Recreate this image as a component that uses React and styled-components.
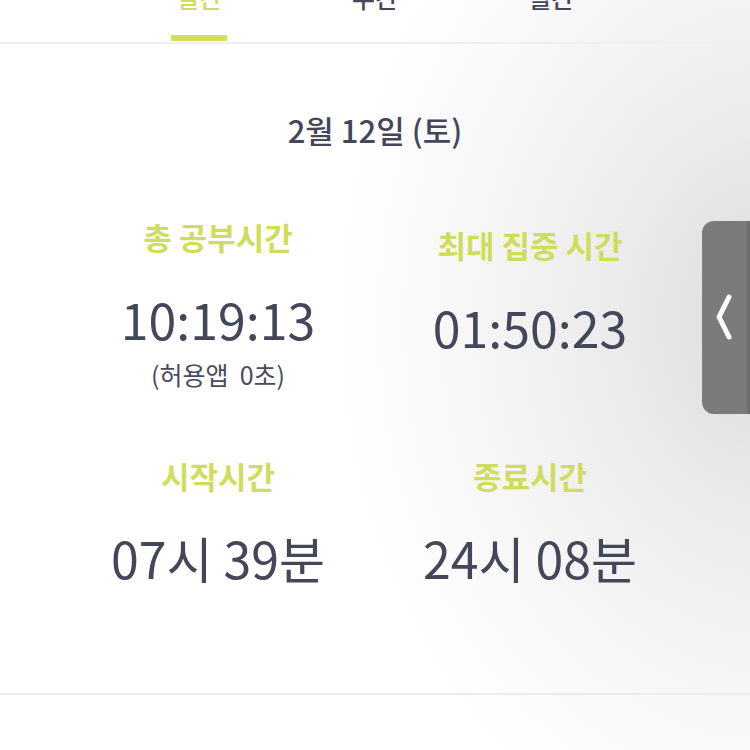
import React from 'react';
import styled, { createGlobalStyle } from 'styled-components';

const GlobalStyle = createGlobalStyle`
  html, body {
    margin: 0;
    padding: 0;
  }
  body {
    width: 750px;
    height: 750px;
    overflow: hidden;
    font-family: "Noto Sans CJK KR", "Noto Sans", sans-serif;
    background:
      radial-gradient(ellipse 440px 560px at 770px 320px, #dadada 0%, #ebebeb 35%, #f7f7f7 70%, rgba(255,255,255,0) 100%),
      #fff;
  }
`;

const tabs = ['일간', '주간', '월간'];

const stats = [
  { label: '총 공부시간', value: '10:19:13', note: '(허용앱  0초)' },
  { label: '최대 집중 시간', value: '01:50:23', nudge: 8 },
  { label: '시작시간', value: '07시 39분' },
  { label: '종료시간', value: '24시 08분' },
];

const App = () => {
  return (
    <S.Page>
      <GlobalStyle />
      <S.TabBar>
        {tabs.map((tab, index) => (
          <S.Tab key={tab}>
            <S.TabText $active={index === 0}>{tab}</S.TabText>
            <S.Indicator $active={index === 0} />
          </S.Tab>
        ))}
      </S.TabBar>
      <S.Divider />
      <S.DateTitle>2월 12일 (토)</S.DateTitle>
      <S.Grid>
        {stats.map((item) => (
          <S.Cell key={item.label} $nudge={item.nudge || 0}>
            <S.Label>{item.label}</S.Label>
            <S.Value>{item.value}</S.Value>
            {item.note && <S.Note>{item.note}</S.Note>}
          </S.Cell>
        ))}
      </S.Grid>
      <S.BottomDivider />
      <S.Handle>
        <svg width="20" height="50" viewBox="0 0 20 50">
          <path
            d="M15 4 L5 24 L15 44"
            fill="none"
            stroke="#fff"
            strokeWidth="5"
            strokeLinecap="round"
            strokeLinejoin="round"
          />
        </svg>
      </S.Handle>
    </S.Page>
  );
};

const S = {
  Page: styled.div`
    position: relative;
    width: 750px;
    height: 750px;
    display: flex;
    flex-direction: column;
  `,
  TabBar: styled.div`
    display: flex;
    justify-content: center;
    margin-top: -20px;
  `,
  Tab: styled.div`
    width: 176px;
    display: flex;
    flex-direction: column;
    align-items: center;
  `,
  TabText: styled.div`
    font-size: 25px;
    font-weight: 500;
    line-height: 34px;
    color: ${(p) => (p.$active ? '#cfdd5c' : '#45465a')};
  `,
  Indicator: styled.div`
    margin-top: 21px;
    width: 56px;
    height: 6px;
    background: ${(p) => (p.$active ? '#d3e05f' : 'transparent')};
  `,
  Divider: styled.div`
    margin-top: 1px;
    height: 2px;
    background: #efefef;
  `,
  DateTitle: styled.div`
    margin-top: 66px;
    text-align: center;
    font-size: 31px;
    font-weight: 500;
    line-height: 40px;
    color: #45465a;
  `,
  Grid: styled.div`
    display: grid;
    grid-template-columns: 312px 312px;
    justify-content: center;
    align-items: start;
    row-gap: 64px;
    margin-top: 66px;
    padding-right: 2px;
  `,
  Cell: styled.div`
    display: flex;
    flex-direction: column;
    align-items: center;
    padding-top: ${(p) => p.$nudge}px;
  `,
  Label: styled.div`
    font-size: 31px;
    font-weight: 700;
    line-height: 42px;
    color: #cfdd5c;
  `,
  Value: styled.div`
    margin-top: 30px;
    font-size: 50px;
    font-weight: 400;
    line-height: 60px;
    color: #44465a;
  `,
  Note: styled.div`
    margin-top: 9px;
    font-size: 25px;
    line-height: 34px;
    color: #4a4b5c;
    white-space: pre;
  `,
  BottomDivider: styled.div`
    margin-top: auto;
    margin-bottom: 55px;
    height: 2px;
    background: #ececec;
  `,
  Handle: styled.div`
    position: absolute;
    top: 221px;
    right: 0;
    width: 48px;
    height: 193px;
    border-radius: 12px 0 0 12px;
    background: #7b7b7b;
    display: flex;
    align-items: center;
    justify-content: flex-start;
    padding-left: 12px;
    box-sizing: border-box;
    border-right: 3px solid #6f6f6f;
  `,
};

export default App;
